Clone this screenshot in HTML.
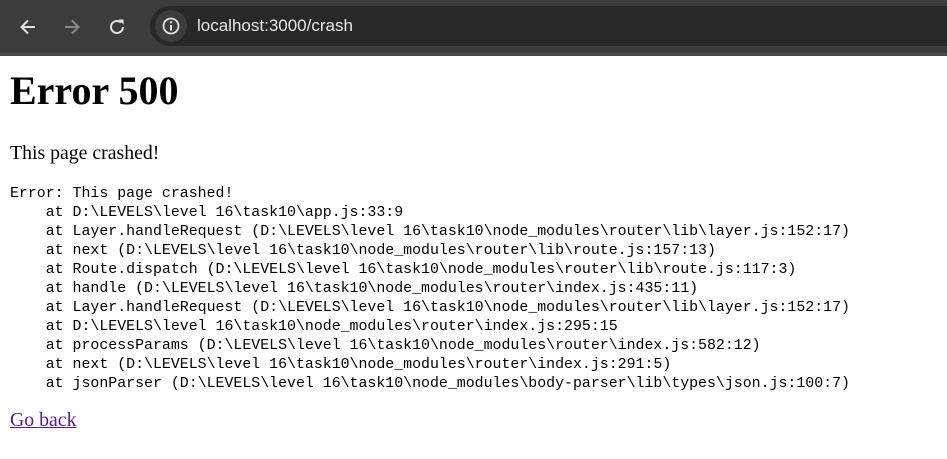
<!DOCTYPE html>
<html><head><meta charset="utf-8"><style>
html,body{margin:0;padding:0;width:947px;height:459px;overflow:hidden;background:#fff}
.bar{position:absolute;left:0;top:0;width:947px;height:56px;background:#3c3c3c}
.bar .bottom{position:absolute;left:0;top:53px;width:947px;height:3px;background:#4a4a4a}
.pill{position:absolute;left:150px;top:6px;width:820px;height:40px;border-radius:20px;background:#282828}
.icon{position:absolute}
.url{position:absolute;left:197px;top:16px;font:17px "Liberation Sans",sans-serif;color:#e8e8e8}
.t{position:absolute;left:10px;white-space:pre;margin:0}
h1.t{font:bold 40px "Liberation Serif",serif;top:67px}
.p{font:19.8px "Liberation Serif",serif;top:142px}
pre.t{font:14.9px/19px "Liberation Mono",monospace;top:185px;color:#000}
a.t{font:19.8px "Liberation Serif",serif;top:409px;color:#551a8b;text-decoration:underline}
</style></head><body>
<div class="bar">
<svg class="icon" style="left:17px;top:16px" width="22" height="22" viewBox="0 0 22 22"><path d="M18 11H5M11 4.5L4.5 11L11 17.5" stroke="#e3e3e3" stroke-width="2" fill="none"/></svg>
<svg class="icon" style="left:61px;top:16px" width="22" height="22" viewBox="0 0 22 22"><path d="M4 11H17M11 4.5L17.5 11L11 17.5" stroke="#8a8a8a" stroke-width="2" fill="none"/></svg>
<svg class="icon" style="left:106px;top:16px" width="22" height="22" viewBox="0 0 22 22"><path d="M17 11A6 6 0 1 1 15 6.5" stroke="#e3e3e3" stroke-width="2" fill="none"/><path d="M12.5 3.5H17.5V8.5Z" fill="#e3e3e3"/></svg>
<div class="pill"></div>
<div style="position:absolute;left:155px;top:10px;width:32px;height:32px;border-radius:16px;background:#3c3c3c"></div>
<svg class="icon" style="left:161px;top:16px" width="20" height="20" viewBox="0 0 20 20"><circle cx="10" cy="10" r="7.5" stroke="#e3e3e3" stroke-width="1.8" fill="none"/><path d="M10 9V14.5" stroke="#e3e3e3" stroke-width="2"/><circle cx="10" cy="6.3" r="1.2" fill="#e3e3e3"/></svg>
<div class="url">localhost:3000/crash</div>
<div class="bottom"></div>
</div>
<h1 class="t">Error 500</h1>
<div class="t p">This page crashed!</div>
<pre class="t">Error: This page crashed!
    at D:\LEVELS\level 16\task10\app.js:33:9
    at Layer.handleRequest (D:\LEVELS\level 16\task10\node_modules\router\lib\layer.js:152:17)
    at next (D:\LEVELS\level 16\task10\node_modules\router\lib\route.js:157:13)
    at Route.dispatch (D:\LEVELS\level 16\task10\node_modules\router\lib\route.js:117:3)
    at handle (D:\LEVELS\level 16\task10\node_modules\router\index.js:435:11)
    at Layer.handleRequest (D:\LEVELS\level 16\task10\node_modules\router\lib\layer.js:152:17)
    at D:\LEVELS\level 16\task10\node_modules\router\index.js:295:15
    at processParams (D:\LEVELS\level 16\task10\node_modules\router\index.js:582:12)
    at next (D:\LEVELS\level 16\task10\node_modules\router\index.js:291:5)
    at jsonParser (D:\LEVELS\level 16\task10\node_modules\body-parser\lib\types\json.js:100:7)</pre>
<a class="t" href="#">Go back</a>
</body></html>
